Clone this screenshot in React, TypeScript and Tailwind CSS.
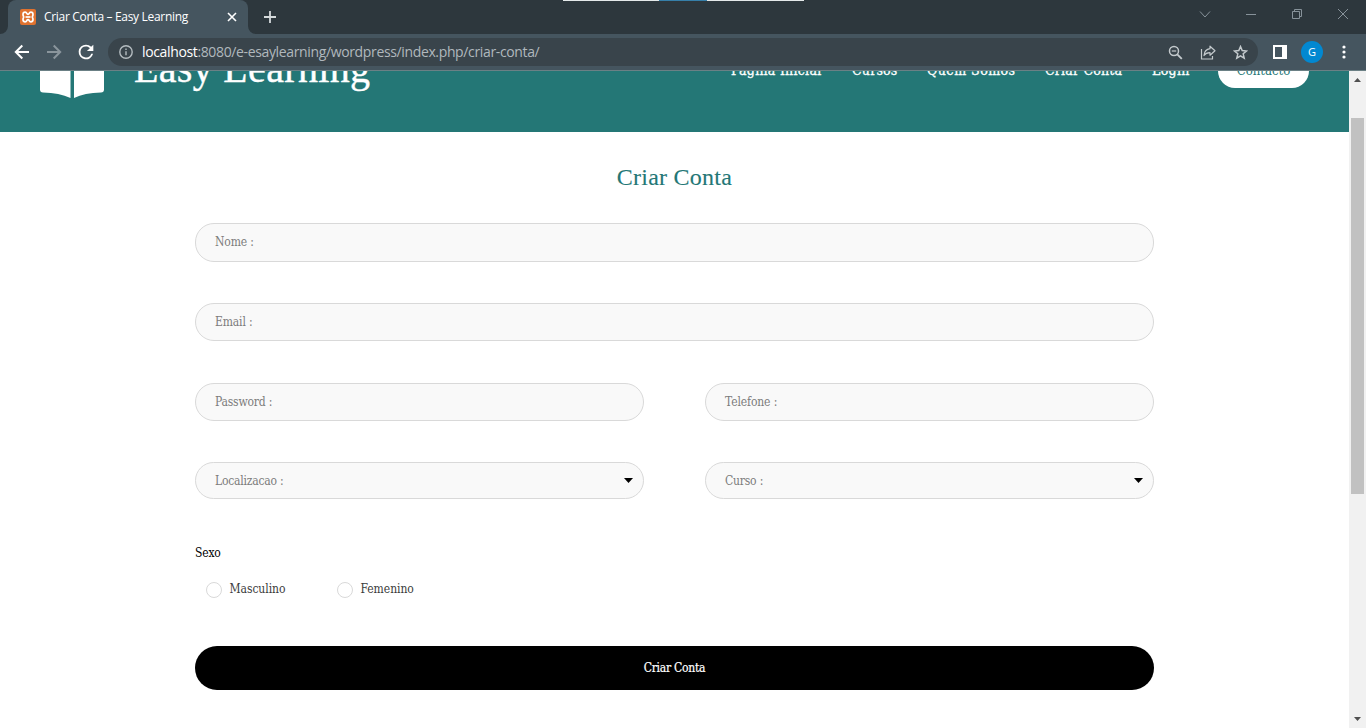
import type { ReactNode } from "react";

const uiFont = "font-['Open_Sans','Noto_Sans',sans-serif]";
const serif = "font-['Liberation_Serif',serif]";
const slab = "font-['DejaVu_Serif_Condensed','DejaVu_Serif',serif] [font-stretch:condensed]";

function TabStrip() {
  return (
    <div className="relative flex h-[34px] items-start bg-[#2d373d]">
      <div className="absolute left-[563px] top-0 flex h-px">
        <span className="w-24 bg-[#e4e9ea]" />
        <span className="w-12 bg-[#367fa9]" />
        <span className="w-[97px] bg-[#e4e9ea]" />
      </div>
      <svg width="8" height="34" className="shrink-0">
        <path d="M8 26v8H0a8 8 0 0 0 8-8z" fill="#45555f" />
      </svg>
      <div className="flex h-[34px] w-60 shrink-0 items-center rounded-t-lg bg-[#45555f] pl-3">
        <svg width="16" height="16" viewBox="0 0 16 16" className="shrink-0">
          <rect width="16" height="16" rx="2" fill="#e0722f" />
          <path
            d="M5.200 3.200C7.200 3.200 6.400 5.300 8 5.300s.8-2.100 2.800-2.100c1.500 0 2.200 1 2.200 2.300 0 1.200-.7 1.700-.7 2.500s.7 1.300.7 2.500c0 1.300-.7 2.300-2.200 2.300-2 0-1.200-2.100-2.800-2.100s-.8 2.100-2.800 2.100C3.700 12.800 3 11.800 3 10.500 3 9.300 3.700 8.800 3.700 8S3 6.700 3 5.500c0-1.300.7-2.300 2.200-2.300z"
            fill="none"
            stroke="#fff"
            strokeWidth="1.700"
          />
          <path d="M5.500 8h5" stroke="#fff" strokeWidth="1.700" />
        </svg>
        <span className="ml-2 w-[183px] whitespace-nowrap text-xs tracking-[-0.320px] text-white">
          Criar Conta – Easy Learning
        </span>
        <svg width="10" height="10" viewBox="0 0 10 10" stroke="#fff" strokeWidth="1.600">
          <path d="M1 1l8 8M9 1L1 9" />
        </svg>
      </div>
      <svg width="8" height="34" className="shrink-0">
        <path d="M0 26v8h8a8 8 0 0 1-8-8z" fill="#45555f" />
      </svg>
      <svg width="12" height="12" viewBox="0 0 12 12" className="ml-2 mt-[11px]" stroke="#d5dadc" strokeWidth="1.800">
        <path d="M6 0v12M0 6h12" />
      </svg>
      <div className="ml-auto mr-[17px] mt-2 flex items-center gap-[34px]">
        <svg width="12" height="12" viewBox="0 0 12 12" fill="none" stroke="#87929a">
          <path d="M1 3.500l5 5.500 5-5.500" />
        </svg>
        <svg width="12" height="12" viewBox="0 0 12 12" fill="none" stroke="#87929a">
          <path d="M1 6.500h10" />
        </svg>
        <svg width="12" height="12" viewBox="0 0 12 12" fill="none" stroke="#87929a">
          <path d="M1.500 3.500h7v7h-7zM3.500 3.500v-2h7v7h-2" />
        </svg>
        <svg width="12" height="12" viewBox="0 0 12 12" fill="none" stroke="#87929a">
          <path d="M1 1l10 10M11 1L1 11" />
        </svg>
      </div>
    </div>
  );
}

function Toolbar() {
  return (
    <div className="flex h-9 items-center bg-[#45555f]">
      <svg width="16" height="16" viewBox="0 0 16 16" className="ml-[14px]" fill="none" stroke="#fff" strokeWidth="2">
        <path d="M15 8H2M8.300 1.500L1.800 8l6.500 6.500" />
      </svg>
      <svg width="16" height="16" viewBox="0 0 16 16" className="ml-4" fill="none" stroke="#8a959c" strokeWidth="2">
        <path d="M1 8h13M7.700 1.500L14.200 8l-6.500 6.500" />
      </svg>
      <svg viewBox="0 0 24 24" className="ml-[13px] h-[22px] w-[22px]" fill="#fff">
        <path d="M17.650 6.350A7.960 7.960 0 0 0 12 4a8 8 0 1 0 7.730 10h-2.080A6 6 0 1 1 12 6c1.660 0 3.140.69 4.220 1.780L13 11h7V4z" />
      </svg>
      <div className="ml-[11px] flex h-7 w-[1150px] items-center rounded-full bg-[#39444b] pl-[11px]">
        <svg width="14" height="14" viewBox="0 0 14 14" fill="none" stroke="#b4bcc0" strokeWidth="1.400">
          <circle cx="7" cy="7" r="6.200" />
          <path d="M7 6.300v4M7 3.500v1.500" />
        </svg>
        <div className="ml-[9px] flex whitespace-nowrap text-sm leading-4 tracking-[-0.360px] text-[#b0b8bd]">
          <span className="text-white">localhost</span>
          <span>:8080/e-esaylearning/wordpress/index.php/criar-conta/</span>
        </div>
        <div className="ml-auto mr-[10px] flex items-center gap-[17px]">
          <svg width="15" height="15" viewBox="0 0 15 15" fill="none" stroke="#c4cacd" strokeWidth="1.500">
            <circle cx="6" cy="6" r="4.500" />
            <path d="M9.300 9.300l4.500 4.500" strokeWidth="1.900" />
            <path d="M3.800 6h4.400" strokeWidth="1.200" />
          </svg>
          <svg width="16" height="15" viewBox="0 0 16 15" fill="none" stroke="#c4cacd" strokeWidth="1.200">
            <path d="M1.500 4v10h11v-3" />
            <path d="M10 1.200l5 4.500-5 4.500V7.700c-3 0-4.700.8-6 2.800.3-3.700 2.500-6.300 6-6.800z" strokeLinejoin="round" />
          </svg>
          <svg width="15" height="15" viewBox="0 0 15 15" fill="none" stroke="#c4cacd" strokeWidth="1.500">
            <path d="M7.500 1.600l1.700 4 4.300.4-3.300 2.800 1 4.300-3.700-2.300-3.700 2.300 1-4.300L1.500 6l4.300-.4z" />
          </svg>
        </div>
      </div>
      <svg width="14" height="14" viewBox="0 0 14 14" className="ml-[15px]">
        <path d="M0 0h14v14H0zM2 2v10h7V2z" fill="#fff" fillRule="evenodd" />
      </svg>
      <div className="ml-[14px] flex size-[22px] items-center justify-center rounded-full bg-[#0288d1] text-[11px] text-white">
        G
      </div>
      <svg width="4" height="14" viewBox="0 0 4 14" className="ml-[19px]" fill="#fff">
        <circle cx="2" cy="2" r="1.600" />
        <circle cx="2" cy="7" r="1.600" />
        <circle cx="2" cy="12" r="1.600" />
      </svg>
    </div>
  );
}

function NavLink({ children, className }: { children: ReactNode; className: string }) {
  return <a className={`-mt-0.5 [-webkit-text-stroke:0.300px_white] ${className}`}>{children}</a>;
}

function SiteHeader() {
  return (
    <header className="-mt-[61px] flex h-[122px] shrink-0 items-center bg-[#247776] pl-10 pr-10 text-white">
      <svg width="64" height="57" viewBox="0 0 64 57" className="-mt-[3px] shrink-0" fill="#fff">
        <path d="M30.500 57V6C22 1.500 12 0 3 0a3 3 0 0 0-3 3v45.500a3 3 0 0 0 3 3c11 .3 20 2.200 27.500 5.500zM34 57V6C42 1.500 52 0 61 0a3 3 0 0 1 3 3v45.500a3 3 0 0 1-3 3c-11 .3-20 2.200-27 5.500z" />
      </svg>
      <span className="-mt-1 ml-[30px] whitespace-nowrap text-[40px] leading-[48px] tracking-[0.320px] [-webkit-text-stroke:0.400px_white]">
        Easy Learning
      </span>
      <nav className={`ml-auto flex items-center whitespace-nowrap text-[14px] ${slab}`}>
        <NavLink className="w-[121px] tracking-[0.260px]">Página Inicial</NavLink>
        <NavLink className="w-[75px] tracking-[0.200px]">Cursos</NavLink>
        <NavLink className="w-[118px] tracking-[0.450px]">Quem Somos</NavLink>
        <NavLink className="w-[107px] tracking-[0.200px]">Criar Conta</NavLink>
        <NavLink className="w-[66px] tracking-[0.300px]">Login</NavLink>
        <a className="flex h-[34px] w-[91px] items-center justify-center rounded-full bg-white pb-px text-[13px] text-[#247776]">
          Contacto
        </a>
      </nav>
    </header>
  );
}

function Field({ children, className, select = false }: { children: ReactNode; className: string; select?: boolean }) {
  return (
    <div
      className={`flex items-center justify-between rounded-[19px] border border-[#d9d9d9] bg-[#f9f9f9] pl-[19px] pr-[10px] text-[12px] leading-4 text-[#7c7c7c] ${slab} ${className}`}
    >
      <span>{children}</span>
      {select && (
        <svg width="9" height="5" viewBox="0 0 9 5">
          <path d="M0 0h9L4.500 5z" fill="#000" />
        </svg>
      )}
    </div>
  );
}

function Radio({ children }: { children: ReactNode }) {
  return (
    <label className={`flex w-[131px] items-center text-[12px] tracking-[-0.050px] text-[#3c3c3c] ${slab}`}>
      <span className="mr-[7.500px] mt-px size-4 rounded-full border border-[#d9d9d9] bg-white" />
      {children}
    </label>
  );
}

function RegistrationForm() {
  return (
    <form className="mx-auto flex w-[959px] flex-col">
      <h1 className="mt-[30px] text-center text-2xl leading-[30px] tracking-[0.250px] text-[#247776] [-webkit-text-stroke:0.100px_#247776]">
        Criar Conta
      </h1>
      <Field className="mt-[31px] h-[39px] pb-px tracking-[-0.150px]">Nome :</Field>
      <Field className="mt-[41px] h-[38px] pb-px tracking-[-0.150px]">Email :</Field>
      <div className="mt-[42px] grid grid-cols-2 gap-x-[61px]">
        <Field className="h-[38px] pb-px tracking-[-0.200px]">Password :</Field>
        <Field className="h-[38px] pb-px tracking-[-0.120px]">Telefone :</Field>
        <Field select className="mt-[41px] h-[37px] tracking-[-0.220px]">Localizacao :</Field>
        <Field select className="mt-[41px] h-[37px] tracking-[-0.200px]">Curso :</Field>
      </div>
      <p className={`mt-[46px] text-[12px] leading-4 tracking-[-0.200px] text-black ${slab}`}>Sexo</p>
      <div className="mt-[19px] flex h-[18px] items-center pl-[11px]">
        <Radio>Masculino</Radio>
        <Radio>Femenino</Radio>
      </div>
      <button
        type="button"
        className={`mt-[48px] flex h-11 items-center justify-center rounded-[22px] bg-black text-[12px] tracking-[-0.250px] text-white [-webkit-text-stroke:0.200px_white] ${slab}`}
      >
        Criar Conta
      </button>
    </form>
  );
}

function Scrollbar() {
  return (
    <div className="flex w-[17px] shrink-0 flex-col items-center bg-[#f1f1f1]">
      <svg width="7" height="4" viewBox="0 0 7 4" className="mt-[7px] shrink-0">
        <path d="M0 4h7L3.500 0z" fill="#505050" />
      </svg>
      <div className="mt-9 h-[376px] w-[13px] shrink-0 bg-[#c1c1c1]" />
      <svg width="7" height="4" viewBox="0 0 7 4" className="mb-[7px] mt-auto shrink-0">
        <path d="M0 0h7L3.500 4z" fill="#505050" />
      </svg>
    </div>
  );
}

export default function App() {
  return (
    <div className="flex h-[728px] w-[1366px] flex-col overflow-hidden bg-white">
      <div className={`shrink-0 border-b border-[#6b8085] ${uiFont}`}>
        <TabStrip />
        <Toolbar />
      </div>
      <div className="flex min-h-0 flex-1">
        <main className={`flex min-w-0 flex-1 flex-col overflow-hidden ${serif}`}>
          <SiteHeader />
          <RegistrationForm />
        </main>
        <Scrollbar />
      </div>
    </div>
  );
}
